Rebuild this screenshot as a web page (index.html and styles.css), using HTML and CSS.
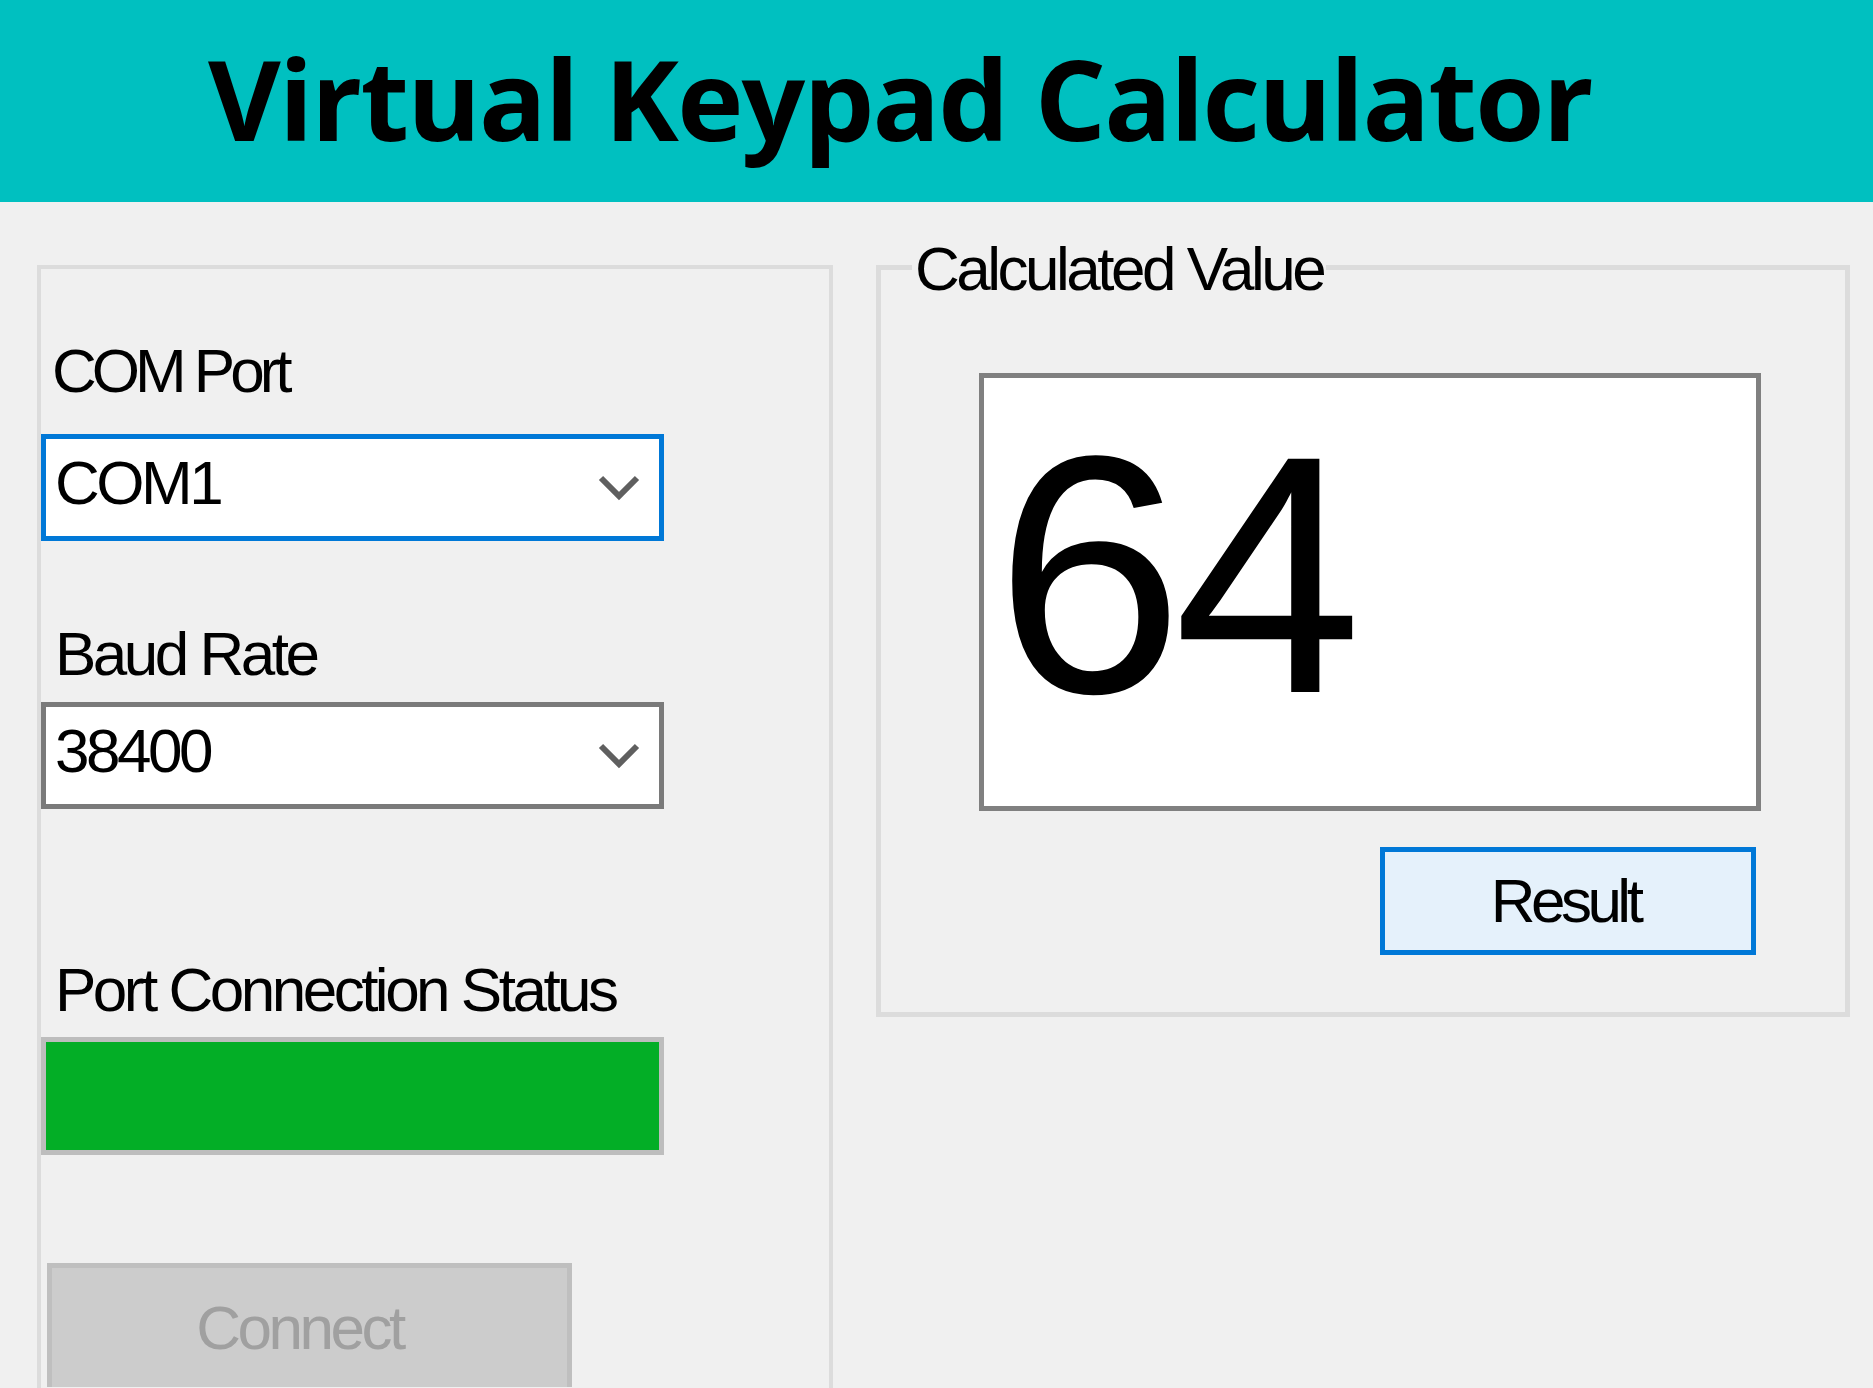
FILE: index.html
```html
<!DOCTYPE html>
<html lang="en">
<head>
<meta charset="utf-8">
<title>Virtual Keypad Calculator</title>
<link rel="stylesheet" href="styles.css">
</head>
<body>
<header class="title-bar">
  <h1 class="title">Virtual Keypad Calculator</h1>
</header>
<main class="content">
  <section class="group group-settings">
    <div class="field-label label-com">COM Port</div>
    <div class="combo combo-focused">
      <span class="combo-text">COM1</span>
      <svg class="chevron" width="42" height="27" viewBox="0 0 42 27"><polyline points="3,4 21,22 39,4" fill="none" stroke="#5f5f5f" stroke-width="6"/></svg>
    </div>
    <div class="field-label label-baud">Baud Rate</div>
    <div class="combo">
      <span class="combo-text">38400</span>
      <svg class="chevron" width="42" height="27" viewBox="0 0 42 27"><polyline points="3,4 21,22 39,4" fill="none" stroke="#5f5f5f" stroke-width="6"/></svg>
    </div>
    <div class="field-label label-status">Port Connection Status</div>
    <div class="status-bar"></div>
    <button class="btn btn-connect" disabled>Connect</button>
  </section>
  <fieldset class="group group-result">
    <legend class="group-legend">Calculated Value</legend>
    <div class="display">64</div>
    <button class="btn btn-result">Result</button>
  </fieldset>
</main>
</body>
</html>
```

FILE: styles.css
```css
html, body {
  margin: 0;
  padding: 0;
  height: 100%;
  overflow: hidden;
}
body {
  background: #f0f0f0;
  font-family: "Liberation Sans", Arial, sans-serif;
  color: #000;
}
.title-bar {
  height: 202px;
  box-sizing: border-box;
  background: #00c0c0;
  padding: 40px 0 0 208px;
}
.title {
  margin: 0;
  font-family: "Open Sans", "Noto Sans", sans-serif;
  font-weight: 700;
  font-size: 112px;
  line-height: 116px;
  letter-spacing: -1.8px;
  color: #000;
}
.content {
  display: flex;
  align-items: flex-start;
}
.group {
  box-sizing: border-box;
}
.group-settings {
  margin: 63px 0 0 37px;
  width: 796px;
  height: 1128px;
  border: 4px solid #dcdcdc;
}
.field-label,
.group-legend,
.combo-text,
.btn {
  font-family: "Liberation Sans", Arial, sans-serif;
  font-size: 62px;
  line-height: 72px;
  letter-spacing: -3.5px;
}
.field-label {
  padding-left: 14px;
}
.label-com {
  margin-top: 66px;
  padding-left: 11px;
  letter-spacing: -5px;
}
.label-baud { margin-top: 77px; }
.label-status { margin-top: 145px; }
.combo {
  width: 623px;
  height: 107px;
  box-sizing: border-box;
  border: 5px solid #7a7a7a;
  background: #fff;
  display: flex;
  align-items: center;
  padding-left: 9px;
  margin-top: 12px;
}
.combo-focused {
  border-color: #0078d7;
  margin-top: 27px;
}
.combo-text {
  margin-bottom: 10px;
}
.chevron {
  margin-left: auto;
  margin-right: 19px;
  flex: none;
}
.status-bar {
  margin-top: 11px;
  width: 623px;
  height: 118px;
  box-sizing: border-box;
  border: 5px solid #bdbdbd;
  background: #03ae26;
}
.btn {
  display: flex;
  align-items: center;
  justify-content: center;
  box-sizing: border-box;
  padding: 0;
  margin: 0;
  color: #000;
}
.btn-connect {
  margin: 108px 0 0 6px;
  width: 525px;
  height: 124px;
  border: 5px solid #bfbfbf;
  border-bottom: 0;
  background: #cccccc;
  color: #a0a0a0;
  padding: 0 20px 0 0;
}
.group-result {
  margin: 27px 0 0 43px;
  padding: 0;
  width: 974px;
  border: 5px solid #dcdcdc;
  min-inline-size: 0;
}
.group-legend {
  margin-left: 31px;
  padding: 4px 3px 0 3px;
}
.display {
  margin: 68px 0 0 98px;
  width: 782px;
  height: 438px;
  box-sizing: border-box;
  border: 5px solid #808080;
  background: #fff;
  padding: 27px 0 0 11px;
  font-family: "Liberation Sans", Arial, sans-serif;
  font-size: 339px;
  line-height: 1;
  letter-spacing: -10px;
}
.btn-result {
  margin: 36px 89px 57px auto;
  width: 376px;
  height: 108px;
  border: 5px solid #0078d7;
  background: #e5f1fb;
  letter-spacing: -4.5px;
  padding: 0 6px 0 0;
}
```
